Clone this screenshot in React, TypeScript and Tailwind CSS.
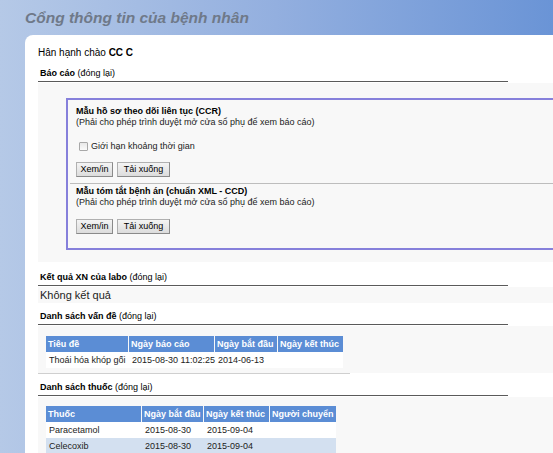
import React from "react";

function SectionHeader({ title, h }: { title: string; h: string }) {
  return (
    <div className={`w-[470px] border-b border-[#5a5a5a] flex items-end pb-[2px] pl-[2px] ${h}`}>
      <span className="text-[9px] leading-[12px] text-black">
        <span className="font-bold">{title}</span> (đóng lại)
      </span>
    </div>
  );
}

function Btn({ children, w }: { children: React.ReactNode; w: string }) {
  return (
    <div
      className={`h-[15px] ${w} flex items-center justify-center text-[9px] leading-[11px] text-black bg-gradient-to-b from-[#f4f4f4] to-[#dcdcdc] border border-[#b0b0b0] border-r-[#8a8a8a] border-b-[#8a8a8a]`}
    >
      {children}
    </div>
  );
}

const hc = "bg-[#5b8dd5] px-[2px] flex items-center whitespace-nowrap overflow-hidden";
const bc = "px-[3px] flex items-center whitespace-nowrap";

export default function App() {
  return (
    <div className="w-[553px] h-[453px] overflow-hidden bg-gradient-to-r from-[#b5c9e7] via-[#93afdf] to-[#6a94d6] font-['Liberation_Sans',Arial,sans-serif] text-black">
      <div className="h-[35px] pl-[25px] pt-[8px] text-[15.5px] leading-[20px] font-bold italic text-[#6f7989]">
        Cổng thông tin của bệnh nhân
      </div>
      <div className="ml-[25px] h-[418px] bg-white rounded-tl-[8px] pl-[13px]">
        <div className="h-[28px] pt-[8px] text-[10px] leading-[20px]">
          Hân hạnh chào <span className="font-bold">CC C</span>
        </div>

        <SectionHeader title="Báo cáo" h="h-[19px]" />
        <div className="mt-[1px] bg-[#f8f8f8] pl-[28px] pt-[15px] pb-[12px]">
          <div className="border-l-2 border-t-2 border-b-2 border-[#8680db] text-[9px] leading-[11px]">
            <div className="pl-[8px] pt-[6px]">
              <div className="font-bold">Mẫu hồ sơ theo dõi liên tục (CCR)</div>
              <div className="text-[#222]">(Phải cho phép trình duyệt mở cửa sổ phụ để xem báo cáo)</div>
              <div className="mt-[11px] h-[14px] flex items-center pl-[3px] gap-[3px]">
                <div className="w-[9px] h-[9px] border border-[#a8a8a8] bg-gradient-to-b from-[#e8e8e8] to-[#fafafa] rounded-[1px]" />
                <span className="text-[#222]">Giới hạn khoảng thời gian</span>
              </div>
              <div className="mt-[9px] flex gap-[4px]">
                <Btn w="w-[37px]">Xem/in</Btn>
                <Btn w="w-[53px]">Tải xuống</Btn>
              </div>
            </div>
            <div className="mt-[6px] ml-[2px] h-[1px] bg-[#bdbdbd]" />
            <div className="pl-[8px] pt-[2px] pb-[14px]">
              <div className="font-bold">Mẫu tóm tắt bệnh án (chuẩn XML - CCD)</div>
              <div className="text-[#222]">(Phải cho phép trình duyệt mở cửa sổ phụ để xem báo cáo)</div>
              <div className="mt-[11px] flex gap-[4px]">
                <Btn w="w-[37px]">Xem/in</Btn>
                <Btn w="w-[53px]">Tải xuống</Btn>
              </div>
            </div>
          </div>
        </div>

        <SectionHeader title="Kết quả XN của labo" h="h-[24px]" />
        <div className="mt-[1px] h-[16px] bg-[#f8f8f8] pl-[2px] flex items-center text-[11px] leading-[14px] text-[#222]">
          Không kết quả
        </div>

        <SectionHeader title="Danh sách vấn đề" h="h-[22px]" />
        <div className="mt-[1px] bg-[#f8f8f8] pl-[8px] pt-[10px] pb-[5px] text-[9px] leading-[11px]">
          <div className="flex gap-[1px] h-[16px] font-bold text-white">
            <div className={`w-[82px] ${hc}`}>Tiêu đề</div>
            <div className={`w-[85px] ${hc}`}>Ngày báo cáo</div>
            <div className={`w-[62px] ${hc}`}>Ngày bắt đầu</div>
            <div className={`w-[65px] ${hc}`}>Ngày kết thúc</div>
          </div>
          <div className="flex gap-[1px] h-[16px] w-[297px] bg-white text-[#222]">
            <div className={`w-[82px] ${bc}`}>Thoái hóa khóp gối</div>
            <div className={`w-[85px] ${bc} px-[2px]`}>2015-08-30 11:02:25</div>
            <div className={`w-[62px] ${bc}`}>2014-06-13</div>
            <div className={`w-[65px] ${bc}`}></div>
          </div>
        </div>
        <div className="w-[312px] h-[1px] bg-[#cfcfcf]" />

        <SectionHeader title="Danh sách thuốc" h="h-[22px]" />
        <div className="mt-[1px] bg-[#f8f8f8] pl-[8px] pt-[9px] pb-[5px] text-[9px] leading-[11px]">
          <div className="flex gap-[1px] h-[16px] font-bold text-white">
            <div className={`w-[95px] ${hc}`}>Thuốc</div>
            <div className={`w-[61px] ${hc}`}>Ngày bắt đầu</div>
            <div className={`w-[65px] ${hc}`}>Ngày kết thúc</div>
            <div className={`w-[66px] ${hc}`}>Người chuyển</div>
          </div>
          <div className="flex gap-[1px] h-[16px] w-[290px] bg-white text-[#222]">
            <div className={`w-[95px] ${bc}`}>Paracetamol</div>
            <div className={`w-[61px] ${bc}`}>2015-08-30</div>
            <div className={`w-[65px] ${bc}`}>2015-09-04</div>
            <div className={`w-[66px] ${bc}`}></div>
          </div>
          <div className="flex gap-[1px] h-[16px] w-[290px] bg-[#d3e0f0] text-[#222]">
            <div className={`w-[95px] ${bc}`}>Celecoxib</div>
            <div className={`w-[61px] ${bc}`}>2015-08-30</div>
            <div className={`w-[65px] ${bc}`}>2015-09-04</div>
            <div className={`w-[66px] ${bc}`}></div>
          </div>
        </div>
      </div>
    </div>
  );
}
